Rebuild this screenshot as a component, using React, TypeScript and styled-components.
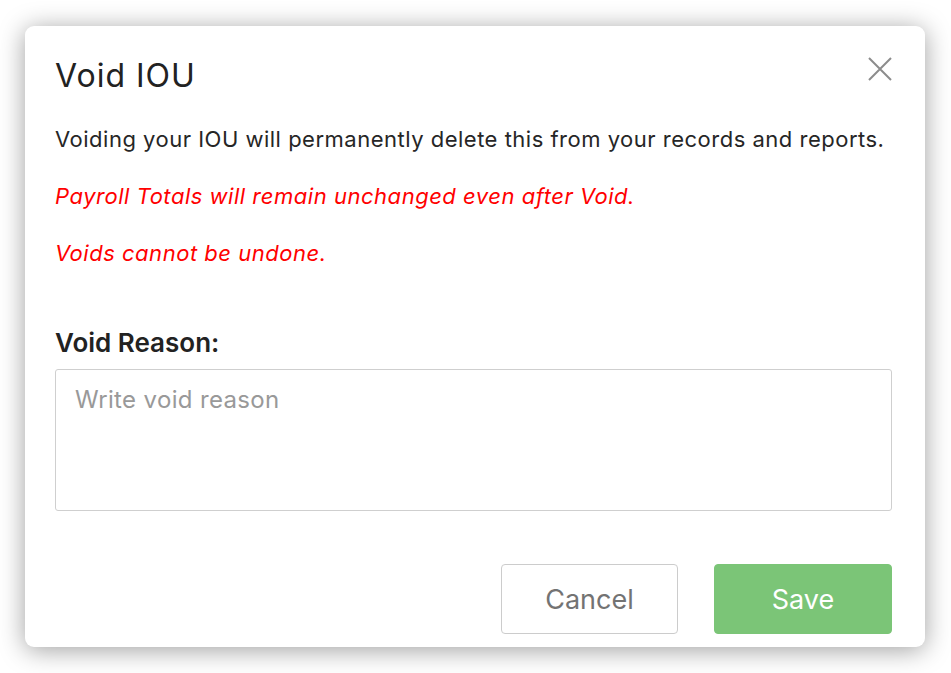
import { useState } from "react";
import styled, { createGlobalStyle } from "styled-components";

const FONT = `"Inter", "Lato", "Liberation Sans", sans-serif`;

const GlobalStyle = createGlobalStyle`
  html, body {
    margin: 0;
    padding: 0;
    background: #ffffff;
  }
  * {
    box-sizing: border-box;
  }
`;

const Page = styled.div`
  width: 951px;
  height: 673px;
  padding: 26px 26px 0 25px;
  font-family: ${FONT};
`;

const Dialog = styled.div`
  width: 900px;
  height: 621px;
  background: #ffffff;
  border-radius: 9px;
  box-shadow: 0 3px 26px rgba(0, 0, 0, 0.38);
  padding: 29px 33px 13px 30px;
  display: flex;
  flex-direction: column;
`;

const Header = styled.div`
  display: flex;
  justify-content: space-between;
  align-items: flex-start;
`;

const Title = styled.h2`
  margin: 0;
  font-size: 32px;
  line-height: 42px;
  font-weight: 400;
  letter-spacing: 1px;
  color: #222222;
`;

const CloseButton = styled.button`
  border: none;
  background: none;
  padding: 0;
  margin-top: 2px;
  width: 24px;
  height: 24px;
  cursor: pointer;
  display: flex;
`;

const Text = styled.p<{ $warn?: boolean; $gap: number }>`
  margin: ${p => p.$gap}px 0 0;
  font-size: 22px;
  line-height: 28px;
  letter-spacing: ${p => (p.$warn ? 0.52 : 0.5)}px;
  color: ${p => (p.$warn ? "#ff0000" : "#262626")};
  font-style: ${p => (p.$warn ? "italic" : "normal")};
  white-space: nowrap;
`;

const Label = styled.label`
  display: block;
  margin-top: 60px;
  font-size: 26px;
  line-height: 32px;
  font-weight: 600;
  color: #222222;
`;

const ReasonInput = styled.textarea`
  display: block;
  margin-top: 10px;
  width: 100%;
  height: 142px;
  border: 1px solid #cfcfcf;
  border-radius: 3px;
  padding: 15px 19px;
  font-family: ${FONT};
  font-size: 24px;
  line-height: 30px;
  letter-spacing: 0.35px;
  color: #333333;
  resize: none;
  outline: none;
  &::placeholder {
    color: #999999;
  }
`;

const Footer = styled.div`
  margin-top: 53px;
  display: flex;
  justify-content: flex-end;
  gap: 36px;
`;

const Button = styled.button<{ $primary?: boolean }>`
  width: ${p => (p.$primary ? 178 : 177)}px;
  height: 70px;
  border-radius: 4px;
  font-family: ${FONT};
  font-size: 27px;
  cursor: pointer;
  border: 1px solid ${p => (p.$primary ? "#7bc577" : "#cccccc")};
  background: ${p => (p.$primary ? "#7bc577" : "#ffffff")};
  color: ${p => (p.$primary ? "#ffffff" : "#737373")};
`;

const CloseIcon = () => (
  <svg width="24" height="24" viewBox="0 0 24 24" fill="none">
    <path d="M1 1 L23 23 M23 1 L1 23" stroke="#8c8c8c" strokeWidth="2" />
  </svg>
);

export default function App() {
  const [reason, setReason] = useState("");
  return (
    <>
      <GlobalStyle />
      <Page>
        <Dialog role="dialog">
          <Header>
            <Title>Void IOU</Title>
            <CloseButton aria-label="Close">
              <CloseIcon />
            </CloseButton>
          </Header>
          <Text $gap={28}>
            Voiding your IOU will permanently delete this from your records and reports.
          </Text>
          <Text $warn $gap={29}>Payroll Totals will remain unchanged even after Void.</Text>
          <Text $warn $gap={29}>Voids cannot be undone.</Text>
          <Label htmlFor="void-reason">Void Reason:</Label>
          <ReasonInput
            id="void-reason"
            placeholder="Write void reason"
            value={reason}
            onChange={e => setReason(e.target.value)}
          />
          <Footer>
            <Button>Cancel</Button>
            <Button $primary>Save</Button>
          </Footer>
        </Dialog>
      </Page>
    </>
  );
}
